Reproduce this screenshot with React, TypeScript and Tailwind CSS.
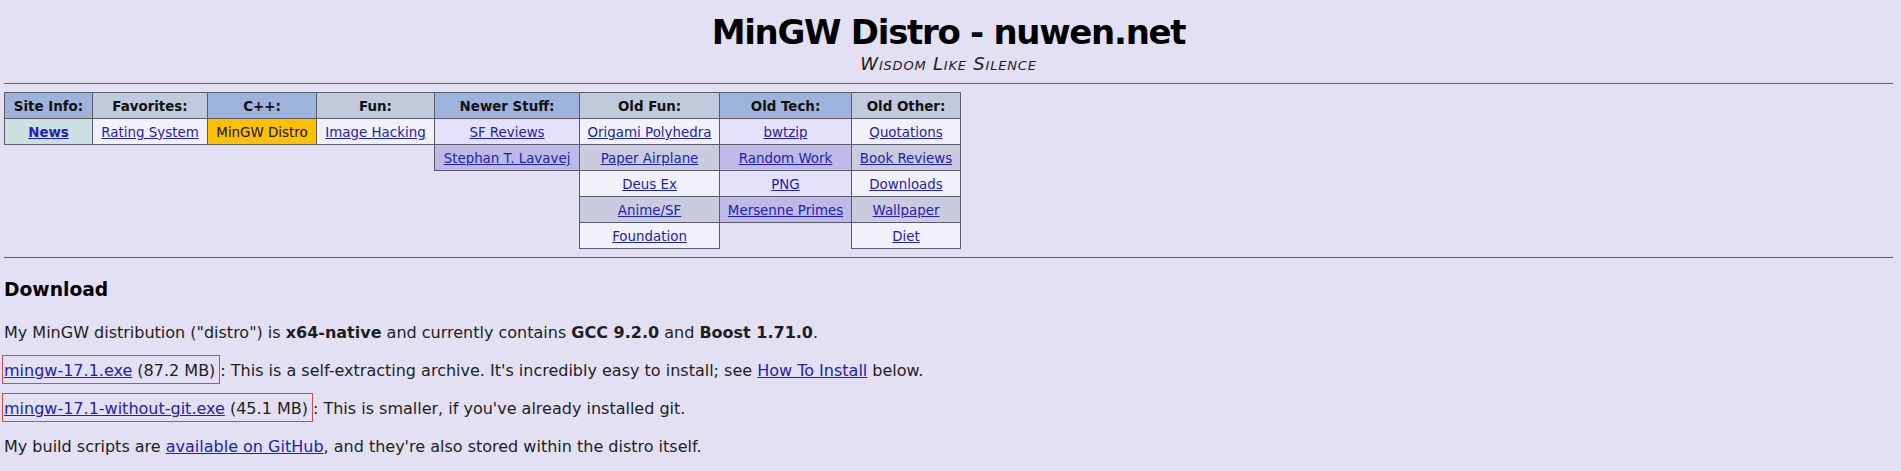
import type { ReactNode } from 'react'

type Kind = 'blue' | 'gray'

type Item = { label: string; bold?: boolean; current?: boolean; bg?: string }

type Column = { title: string; kind: Kind; width: string; items: Item[] }

const HEAD_BG: Record<Kind, string> = {
  blue: 'bg-[#9eb3dc]',
  gray: 'bg-[#c1c9dc]',
}

// alternating row shades per column kind
const ROW_BG: Record<Kind, [string, string]> = {
  blue: ['bg-[#e4e2fa]', 'bg-[#bfb9e6]'],
  gray: ['bg-[#f1f1fa]', 'bg-[#cbcbe0]'],
}

const COLUMNS: Column[] = [
  { title: 'Site Info:', kind: 'blue', width: 'w-[89px]', items: [{ label: 'News', bold: true, bg: 'bg-[#cde0e2]' }] },
  { title: 'Favorites:', kind: 'gray', width: 'w-[116px]', items: [{ label: 'Rating System' }] },
  { title: 'C++:', kind: 'blue', width: 'w-[110px]', items: [{ label: 'MinGW Distro', current: true, bg: 'bg-[#ffc000]' }] },
  { title: 'Fun:', kind: 'gray', width: 'w-[119px]', items: [{ label: 'Image Hacking' }] },
  { title: 'Newer Stuff:', kind: 'blue', width: 'w-[146px]', items: [{ label: 'SF Reviews' }, { label: 'Stephan T. Lavavej' }] },
  {
    title: 'Old Fun:',
    kind: 'gray',
    width: 'w-[141px]',
    items: [
      { label: 'Origami Polyhedra' },
      { label: 'Paper Airplane' },
      { label: 'Deus Ex' },
      { label: 'Anime/SF' },
      { label: 'Foundation' },
    ],
  },
  {
    title: 'Old Tech:',
    kind: 'blue',
    width: 'w-[133px]',
    items: [{ label: 'bwtzip' }, { label: 'Random Work' }, { label: 'PNG' }, { label: 'Mersenne Primes' }],
  },
  {
    title: 'Old Other:',
    kind: 'gray',
    width: 'w-[110px]',
    items: [
      { label: 'Quotations' },
      { label: 'Book Reviews' },
      { label: 'Downloads' },
      { label: 'Wallpaper' },
      { label: 'Diet' },
    ],
  },
]

function A({ children, bold }: { children: ReactNode; bold?: boolean }) {
  return (
    <a href="#" className={`text-[#2121b3] underline ${bold ? 'font-bold' : ''}`}>
      {children}
    </a>
  )
}

function NavColumn({ col, first }: { col: Column; first: boolean }) {
  return (
    <div className={`flex flex-col ${col.width} ${first ? '' : '-ml-px'}`}>
      <div
        className={`flex h-[27px] items-center justify-center border border-[#5b5b6b] pt-[3px] font-bold text-[#111] ${HEAD_BG[col.kind]}`}
      >
        {col.title}
      </div>
      {col.items.map((item, i) => (
        <div
          key={item.label}
          className={`-mt-px flex h-[27px] items-center justify-center border border-[#5b5b6b] pt-[3px] whitespace-nowrap ${
            item.bg ?? ROW_BG[col.kind][i % 2]
          }`}
        >
          {item.current ? <span className="text-[#111]">{item.label}</span> : <A bold={item.bold}>{item.label}</A>}
        </div>
      ))}
    </div>
  )
}

function Boxed({ children }: { children: ReactNode }) {
  return <span className="-ml-[2px] border border-[#d84a4a] pt-[5px] pb-[3px] pl-[1px] pr-[4px]">{children}</span>
}

export default function App() {
  return (
    <div className="min-h-screen bg-[#e2e0f2] pl-[4px] pr-[8px] font-['DejaVu_Sans',Verdana,sans-serif] text-[#1e1e1e]">
      <div className="pt-[10px] text-center">
        <h1 className="h-[44px] text-[34px] leading-[44px] font-bold tracking-[-1.3px] text-black">
          MinGW Distro - nuwen.net
        </h1>
        <div className="h-[20px] text-[18px] leading-[20px] tracking-[0.8px] italic [font-variant-caps:small-caps]">
          Wisdom Like Silence
        </div>
      </div>

      <div className="mt-[9px] border-t border-[#5c5c6e]" />

      <nav className="mt-[8px] flex items-start text-[13.4px]">
        {COLUMNS.map((col, i) => (
          <NavColumn key={col.title} col={col} first={i === 0} />
        ))}
      </nav>

      <div className="mt-[8px] border-t border-[#5c5c6e]" />

      <h3 className="mt-[21px] h-[22px] text-[18.72px] leading-[22px] font-bold text-black">Download</h3>

      <div className="mt-[21px] text-[16px] leading-[22px]">
        <p className="mb-[16px]">
          My MinGW distribution ("distro") is <b>x64-native</b> and currently contains <b>GCC 9.2.0</b> and{' '}
          <b>Boost 1.71.0</b>.
        </p>
        <p className="mb-[16px]">
          <Boxed>
            <A>mingw-17.1.exe</A> (87.2 MB)
          </Boxed>
          : This is a self-extracting archive. It's incredibly easy to install; see <A>How To Install</A> below.
        </p>
        <p className="mb-[16px]">
          <Boxed>
            <A>mingw-17.1-without-git.exe</A> (45.1 MB)
          </Boxed>
          : This is smaller, if you've already installed git.
        </p>
        <p>
          My build scripts are <A>available on GitHub</A>, and they're also stored within the distro itself.
        </p>
      </div>
    </div>
  )
}
